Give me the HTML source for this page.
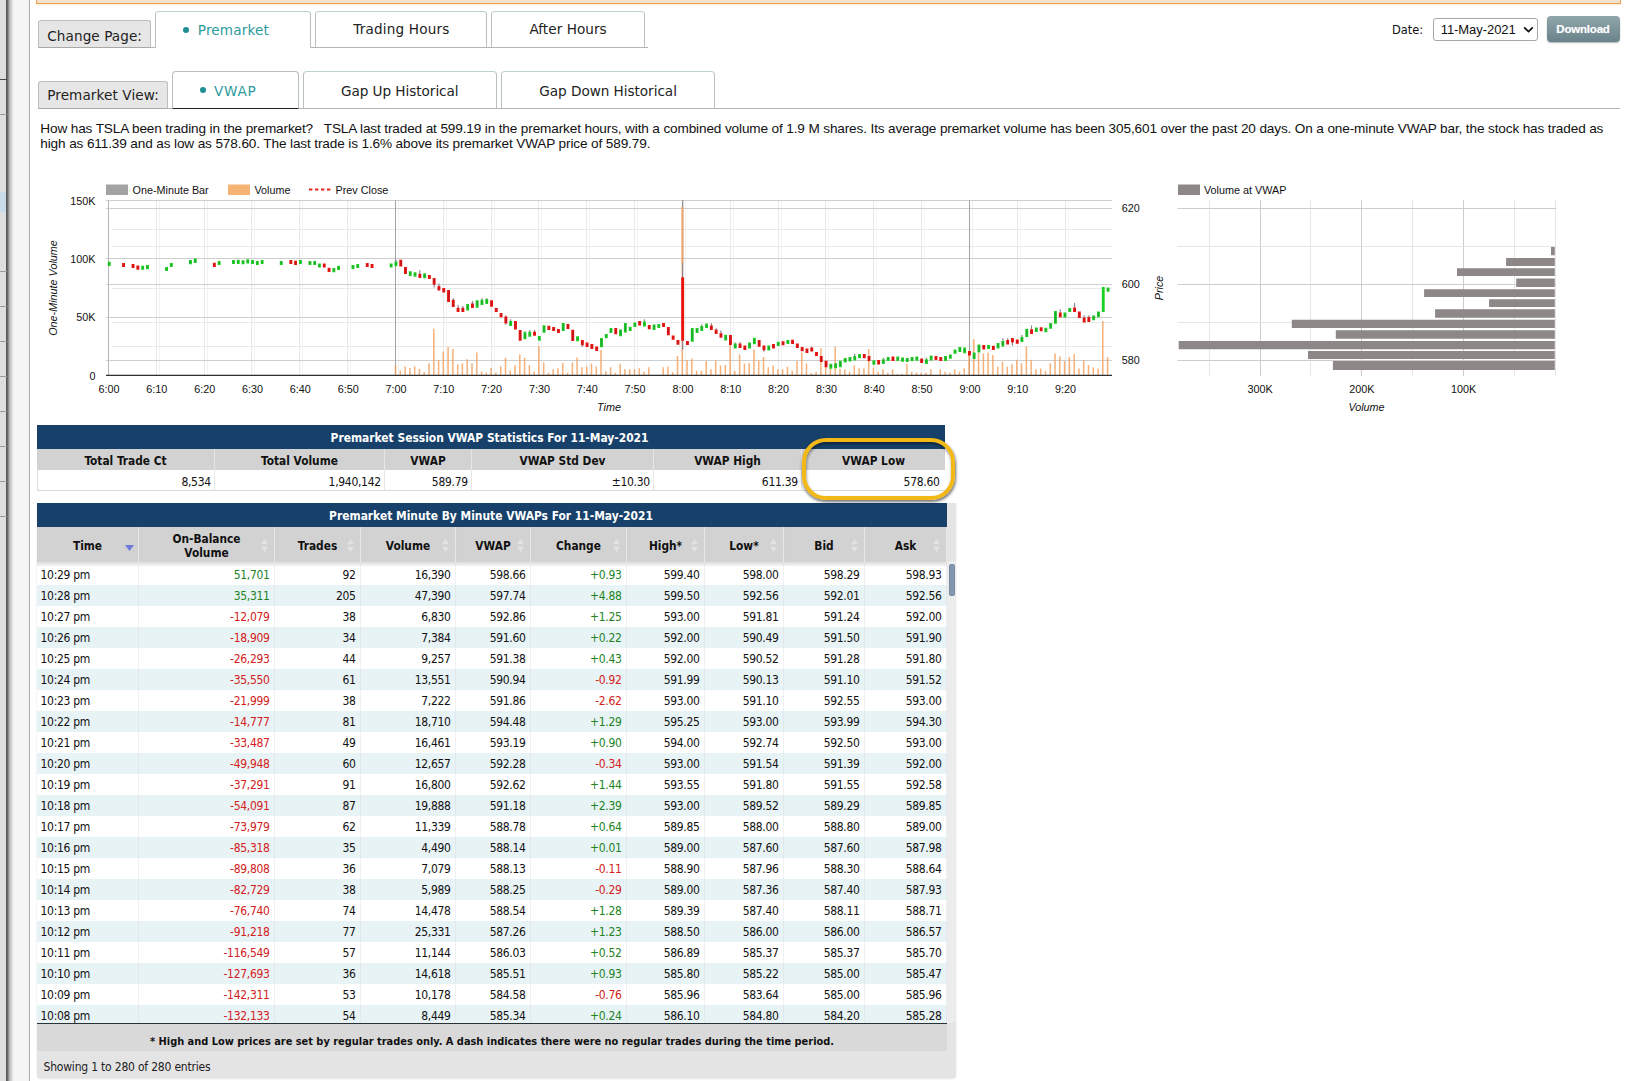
<!DOCTYPE html>
<html lang="en"><head><meta charset="utf-8"><title>TSLA Premarket VWAP</title>
<style>
html,body{margin:0;padding:0;background:#fff}
body{width:1627px;height:1081px;overflow:hidden;font-family:"Liberation Sans",Arial,sans-serif;color:#111}
#page{position:relative;width:1627px;height:1081px;overflow:hidden;background:#fff}
#page>div,#page>p,#page>table{position:absolute}
.ls0{left:0;top:0;width:7px;height:1081px;background:#dedede}
.ls1{left:6px;top:0;width:8px;height:1081px;background:linear-gradient(90deg,#4e4e4e 0,#6a6a6a 1.5px,#b5b5b5 3.5px,#ececec 7px,#f5f5f5 8px)}
.ls2{left:14px;top:0;width:15px;height:1081px;background:#f5f5f5;border-right:1.5px solid #a9a9a9}
.lh{left:0;width:6.5px;height:1px;background:#9a9a9a}
.lb{left:0;top:192px;width:6px;height:20px;background:#c9dbe8}
.obox{left:36px;top:-6px;width:1583px;height:7.5px;background:#f3e2cc;border:1.5px solid #f0a04a;box-shadow:0 1px 1px rgba(240,170,90,.18)}
.navline{height:1px;background:#b5b5b5}
.lbl{box-sizing:border-box;background:#e6e6e6;border:1px solid #bdbdbd;border-bottom-color:#a8a8a8;border-radius:3px 3px 0 0}
.tab{box-sizing:border-box;background:#fff;border:1px solid #b9bfbc;border-top-color:#bcd3c8;border-bottom:none;border-radius:4px 4px 0 0}
.tab.act2{border-bottom:1.5px solid #222;border-top-color:#b9bfbc}
.tx{font-family:"DejaVu Sans","Liberation Sans",sans-serif;font-size:13.6px;line-height:16px;color:#222;white-space:nowrap}
.tx.teal{color:#2b9a9c}
.dot{width:6px;height:6px;border-radius:50%;background:#1f8f93}
.dlabel{left:1392px;top:22.3px;font-family:"DejaVu Sans Condensed","Liberation Sans",sans-serif;font-size:12.7px;line-height:16px;color:#111}
.sel{left:1433px;top:18.4px;width:104.5px;height:22.3px;box-sizing:border-box;border:1px solid #a6a6a6;border-radius:3px;background:#fff;font-size:13px;line-height:16px;letter-spacing:-0.06px}
.sel span{position:absolute;left:6.7px;top:2.7px}
.sel svg{position:absolute;left:89px;top:6.9px}
.btn{left:1546.5px;top:16.4px;width:73px;height:25.8px;border-radius:4px;background:linear-gradient(#90a6ab,#69838a);box-shadow:0 1px 1.5px rgba(0,0,0,.3);color:#fff;font-size:11.5px;font-weight:bold;text-align:center;line-height:27px;letter-spacing:-0.2px;text-shadow:0 0 1px rgba(255,255,255,.4)}
.para{margin:0;left:40.3px;top:121.5px;width:1580px;height:32px;font-size:13.6px;line-height:14.55px;white-space:nowrap;color:#111;letter-spacing:-0.136px}
.para span{position:absolute;left:0;top:0}
.para .l2{top:15.1px;letter-spacing:-0.128px}
table{border-collapse:separate;table-layout:fixed;font-family:"DejaVu Sans Condensed","Liberation Sans",sans-serif}
.stat{left:37px;top:425px;width:908px;font-size:12px}
.stat .ttl th{background:#17416a;color:#fff;height:24px;box-sizing:border-box;padding:1.5px 3px 0 0;font-size:11.9px;font-weight:bold;text-align:center}
.stat .hd th{background:#d2d2d2;height:21px;padding:2px 0 0;box-sizing:border-box;color:#111;font-size:11.8px;font-weight:bold;border-right:1px solid #e6e6e6}
.stat .hd th:last-child,.stat td:last-child{border-right:none}
.stat td{height:21px;box-sizing:border-box;letter-spacing:-0.3px;padding:3px 3.2px 0 0;text-align:right;border-right:1px solid #e6e6e6;border-bottom:1px solid #d9d9d9;background:#fff}
.stat td:first-child{border-left:1px solid #e0e0e0}
.wrap{left:37px;top:503px;width:919px;height:575px;background:#e4e4e4;border-radius:0 0 4px 4px;box-shadow:0 1px 2px rgba(0,0,0,.12)}
.wrap>*{position:absolute}
.ttl2{left:0;top:0;width:908px;height:24px;overflow:hidden;background:#17416a;color:#fff;font:bold 11.9px/27.4px "DejaVu Sans Condensed","Liberation Sans",sans-serif;text-align:center;padding-right:2px}
.hdr{left:0;top:24px;width:910px;font-size:11.8px}
.hdr th{position:relative;height:35px;padding:0;background:#d2d2d2;border-right:1.5px solid #e8e8e8;border-left:1px solid #d0d0d0;font-weight:bold;line-height:14px;color:#111;vertical-align:middle}
.hdr th span{display:inline-block;position:relative;left:-0.5px;top:1px}
.hdr .si{position:absolute;right:4px;top:18px}
.hdr .si2{position:absolute;right:6px;top:12px}
.body{left:0;top:60.5px;width:910px;height:459.5px;overflow:hidden;background:#fff;border-bottom:1.5px solid #2a3238}
.dat{width:910px;font-size:12px;letter-spacing:-0.3px}
.dat td{height:21px;padding:1px 4.4px 0 0;text-align:right;border-right:1px solid rgba(214,220,224,.42);color:#111;box-sizing:border-box}
.dat td.t{text-align:left;padding:1px 0 0 3.5px;letter-spacing:-0.3px}
.dat tr.o td{background:#fff}
.dat tr.e td{background:#e8f3f6}
.dat td.pos{color:#21841f}
.dat td.neg{color:#d32020}
.sbar{left:910px;top:58px;width:9px;height:462px;background:#ececec}
.thumb{position:absolute;left:1.5px;top:3px;width:6px;height:32px;border-radius:3px;background:#8097ad;box-shadow:inset 0 0 0 0.5px #6d8298}
.foot{left:0;top:521px;width:910px;height:23.5px;padding-top:3.5px;background:#d9d9d9;font:bold 10.93px/27px "DejaVu Sans Condensed","Liberation Sans",sans-serif;text-align:center;color:#111}
.info{left:6.5px;top:555.7px;font:12px/16px "DejaVu Sans Condensed","Liberation Sans",sans-serif;color:#222;letter-spacing:-0.2px}
.hl{left:801.6px;top:438.3px;width:145.5px;height:53.7px;border:4.6px solid #f2b815;border-radius:24px;box-shadow:0.5px 2px 3px rgba(0,0,0,.55),inset 0.5px 2px 3px rgba(0,0,0,.45)}
.stat td:last-child{padding-right:5.5px}
.body::before{content:"";position:absolute;left:0;top:0;width:100%;height:3px;background:linear-gradient(rgba(0,0,0,.09),rgba(0,0,0,0));z-index:2}

</style></head>
<body>
<div id="page">
<div class="ls0"></div><div class="ls1"></div><div class="ls2"></div>
<div class="lh" style="top:78.5px;background:#4a4a4a"></div><div class="lh" style="top:114px"></div><div class="lh" style="top:271px"></div><div class="lh" style="top:306px"></div><div class="lh" style="top:341px"></div><div class="lh" style="top:376px"></div><div class="lh" style="top:411px"></div><div class="lh" style="top:446px"></div><div class="lh" style="top:481px"></div><div class="lh" style="top:516px"></div><div class="lb"></div>
<div class="obox"></div>

<div class="navline" style="left:38px;top:47px;width:610px"></div>
<div class="lbl" style="left:38px;top:20px;width:113px;height:28px"></div>
<div class="tab act" style="left:155px;top:11px;width:156px;height:37px"></div>
<div class="tab" style="left:315px;top:11px;width:172px;height:36px"></div>
<div class="tab" style="left:491px;top:11px;width:154px;height:36px"></div>
<div class="dot" style="left:183px;top:27px"></div>
<div class="tx" style="left:47.3px;top:27.6px;letter-spacing:0.07px">Change Page:</div>
<div class="tx teal" style="left:197.8px;top:22.2px;letter-spacing:0.14px">Premarket</div>
<div class="tx" style="left:353.3px;top:21.2px;letter-spacing:0.17px">Trading Hours</div>
<div class="tx" style="left:529.4px;top:21.2px;letter-spacing:0.05px">After Hours</div>

<div class="dlabel">Date:</div>
<div class="sel"><span>11-May-2021</span><svg width="11" height="8" viewBox="0 0 11 8"><path d="M1.2 1.4L5.5 5.600l4.3-4.200" fill="none" stroke="#111" stroke-width="1.8"/></svg></div>
<div class="btn">Download</div>

<div class="navline" style="left:38px;top:108px;width:1582px"></div>
<div class="lbl" style="left:38px;top:81px;width:130px;height:28px"></div>
<div class="tab act2" style="left:172px;top:71px;width:127px;height:38px"></div>
<div class="tab" style="left:303px;top:71px;width:194px;height:37px"></div>
<div class="tab" style="left:501px;top:71px;width:214px;height:37px"></div>
<div class="dot" style="left:200.3px;top:87.2px"></div>
<div class="tx" style="left:47.2px;top:87.4px;letter-spacing:0.1px">Premarket View:</div>
<div class="tx teal" style="left:214px;top:82.8px;letter-spacing:0.7px">VWAP</div>
<div class="tx" style="left:341px;top:82.8px;letter-spacing:-0.05px">Gap Up Historical</div>
<div class="tx" style="left:539.3px;top:82.8px;letter-spacing:-0.04px">Gap Down Historical</div>

<p class="para"><span class="l1">How has TSLA been trading in the premarket? &nbsp; TSLA last traded at 599.19 in the premarket hours, with a combined volume of 1.9 M shares. Its average premarket volume has been 305,601 over the past 20 days. On a one-minute VWAP bar, the stock has traded as</span> <span class="l2">high as 611.39 and as low as 578.60. The last trade is 1.6% above its premarket VWAP price of 589.79.</span></p>

<svg class="charts" width="1627" height="250" viewBox="0 170 1627 250" style="position:absolute;left:0;top:170px" font-family="Liberation Sans, Arial, sans-serif" font-size="10.8" fill="#111">
<path d="M156.5 200.5V375.5" stroke="#e8e8e8" stroke-width="1" fill="none"/>
<path d="M159.5 200.5V375.5" stroke="#f3f3f3" stroke-width="1" fill="none"/>
<path d="M204.5 200.5V375.5" stroke="#e8e8e8" stroke-width="1" fill="none"/>
<path d="M207.5 200.5V375.5" stroke="#f3f3f3" stroke-width="1" fill="none"/>
<path d="M251.5 200.5V375.5" stroke="#e8e8e8" stroke-width="1" fill="none"/>
<path d="M254.5 200.5V375.5" stroke="#f3f3f3" stroke-width="1" fill="none"/>
<path d="M299.5 200.5V375.5" stroke="#e8e8e8" stroke-width="1" fill="none"/>
<path d="M302.5 200.5V375.5" stroke="#f3f3f3" stroke-width="1" fill="none"/>
<path d="M347.5 200.5V375.5" stroke="#e8e8e8" stroke-width="1" fill="none"/>
<path d="M350.5 200.5V375.5" stroke="#f3f3f3" stroke-width="1" fill="none"/>
<path d="M395.5 200.5V375.5" stroke="#e8e8e8" stroke-width="1" fill="none"/>
<path d="M398.5 200.5V375.5" stroke="#f3f3f3" stroke-width="1" fill="none"/>
<path d="M443.5 200.5V375.5" stroke="#e8e8e8" stroke-width="1" fill="none"/>
<path d="M446.5 200.5V375.5" stroke="#f3f3f3" stroke-width="1" fill="none"/>
<path d="M491.5 200.5V375.5" stroke="#e8e8e8" stroke-width="1" fill="none"/>
<path d="M494.5 200.5V375.5" stroke="#f3f3f3" stroke-width="1" fill="none"/>
<path d="M538.5 200.5V375.5" stroke="#e8e8e8" stroke-width="1" fill="none"/>
<path d="M541.5 200.5V375.5" stroke="#f3f3f3" stroke-width="1" fill="none"/>
<path d="M586.5 200.5V375.5" stroke="#e8e8e8" stroke-width="1" fill="none"/>
<path d="M589.5 200.5V375.5" stroke="#f3f3f3" stroke-width="1" fill="none"/>
<path d="M634.5 200.5V375.5" stroke="#e8e8e8" stroke-width="1" fill="none"/>
<path d="M637.5 200.5V375.5" stroke="#f3f3f3" stroke-width="1" fill="none"/>
<path d="M682.5 200.5V375.5" stroke="#e8e8e8" stroke-width="1" fill="none"/>
<path d="M685.5 200.5V375.5" stroke="#f3f3f3" stroke-width="1" fill="none"/>
<path d="M730.5 200.5V375.5" stroke="#e8e8e8" stroke-width="1" fill="none"/>
<path d="M733.5 200.5V375.5" stroke="#f3f3f3" stroke-width="1" fill="none"/>
<path d="M778.5 200.5V375.5" stroke="#e8e8e8" stroke-width="1" fill="none"/>
<path d="M781.5 200.5V375.5" stroke="#f3f3f3" stroke-width="1" fill="none"/>
<path d="M825.5 200.5V375.5" stroke="#e8e8e8" stroke-width="1" fill="none"/>
<path d="M828.5 200.5V375.5" stroke="#f3f3f3" stroke-width="1" fill="none"/>
<path d="M873.5 200.5V375.5" stroke="#e8e8e8" stroke-width="1" fill="none"/>
<path d="M876.5 200.5V375.5" stroke="#f3f3f3" stroke-width="1" fill="none"/>
<path d="M921.5 200.5V375.5" stroke="#e8e8e8" stroke-width="1" fill="none"/>
<path d="M924.5 200.5V375.5" stroke="#f3f3f3" stroke-width="1" fill="none"/>
<path d="M969.5 200.5V375.5" stroke="#e8e8e8" stroke-width="1" fill="none"/>
<path d="M972.5 200.5V375.5" stroke="#f3f3f3" stroke-width="1" fill="none"/>
<path d="M1017.5 200.5V375.5" stroke="#e8e8e8" stroke-width="1" fill="none"/>
<path d="M1020.5 200.5V375.5" stroke="#f3f3f3" stroke-width="1" fill="none"/>
<path d="M1065.5 200.5V375.5" stroke="#e8e8e8" stroke-width="1" fill="none"/>
<path d="M1068.5 200.5V375.5" stroke="#f3f3f3" stroke-width="1" fill="none"/>
<path d="M112 346.5H1112" stroke="#e9e9e9" stroke-width="1" fill="none"/>
<path d="M112 288.5H1112" stroke="#e9e9e9" stroke-width="1" fill="none"/>
<path d="M112 229.5H1112" stroke="#e9e9e9" stroke-width="1" fill="none"/>
<path d="M112 322.5H1112" stroke="#e9e9e9" stroke-width="1" fill="none"/>
<path d="M112 246.5H1112" stroke="#e9e9e9" stroke-width="1" fill="none"/>
<path d="M106 317.5H1112" stroke="#cecece" stroke-width="1" fill="none"/>
<path d="M106 258.5H1112" stroke="#cecece" stroke-width="1" fill="none"/>
<path d="M106 200.5H1112" stroke="#cecece" stroke-width="1" fill="none"/>
<path d="M106 360.5H1112" stroke="#cecece" stroke-width="1" fill="none"/>
<path d="M106 284.5H1112" stroke="#cecece" stroke-width="1" fill="none"/>
<path d="M106 208.5H1112" stroke="#cecece" stroke-width="1" fill="none"/>
<path d="M108.5 200.5V375.5" stroke="#b4b4b4" stroke-width="1" fill="none"/>
<path d="M395.5 200.5V375.5" stroke="#a4a4a4" stroke-width="1" fill="none"/>
<path d="M969.5 200.5V375.5" stroke="#a4a4a4" stroke-width="1" fill="none"/>
<path d="M395.5 375.5V365.2M400.3 375.5V370.6M405.1 375.5V366.2M409.9 375.5V368.1M414.7 375.5V366.2M419.4 375.5V369.1M424.2 375.5V372.1M429 375.5V363.2M433.8 375.5V328.8M438.6 375.5V360.3M443.3 375.5V351.4M448.1 375.5V347M452.9 375.5V349M457.7 375.5V364.2M462.4 375.5V363.2M467.2 375.5V359.3M472 375.5V363.2M476.8 375.5V352.4M481.6 375.5V371.6M486.3 375.5V372.6M491.1 375.5V368.1M495.9 375.5V372.6M500.7 375.5V366.2M505.5 375.5V357.8M510.2 375.5V370.6M515 375.5V365.2M519.8 375.5V354.4M524.6 375.5V357.8M529.4 375.5V365.2M534.1 375.5V371.6M538.9 375.5V346M543.7 375.5V362.4M548.5 375.5V372.7M553.2 375.5V369.3M558 375.5V368.3M562.8 375.5V362.9M567.6 375.5V372.7M572.4 375.5V362.4M577.1 375.5V357.5M581.9 375.5V367.3M586.7 375.5V366.8M591.5 375.5V363.4M596.3 375.5V366.4M601 375.5V350.1M605.8 375.5V371.3M610.6 375.5V367.3M615.4 375.5V372.7M620.2 375.5V363.9M624.9 375.5V369.3M629.7 375.5V369.3M634.5 375.5V369.3M639.3 375.5V368.3M644 375.5V371.8M648.8 375.5V367.3M663.2 375.5V367.3M667.9 375.5V366.4M672.7 375.5V372.3M677.5 375.5V356M682.3 375.5V206.8M687.1 375.5V360M691.8 375.5V358.5M696.6 375.5V370.8M701.4 375.5V370.8M706.2 375.5V360.9M711 375.5V369.3M715.7 375.5V360.5M720.5 375.5V365.4M725.3 375.5V364.9M730.1 375.5V344.2M734.8 375.5V370.8M739.6 375.5V354.6M744.4 375.5V363.4M749.2 375.5V362.9M754 375.5V349.6M758.7 375.5V360.5M763.5 375.5V357M768.3 375.5V367.3M773.1 375.5V365.4M777.9 375.5V369.3M782.6 375.5V369.3M787.4 375.5V366.8M792.2 375.5V370.8M797 375.5V360.9M801.8 375.5V352.6M806.5 375.5V363.4M811.3 375.5V373.2M816.1 375.5V371.8M820.9 375.5V348.2M825.7 375.5V366.8M830.4 375.5V368.8M835.2 375.5V346.7M840 375.5V368.8M844.8 375.5V369.3M849.5 375.5V371.8M854.3 375.5V365.4M859.1 375.5V368.3M863.9 375.5V368.3M868.7 375.5V349.1M873.4 375.5V368.3M878.2 375.5V371.8M883 375.5V369.3M887.8 375.5V372.7M892.6 375.5V369.3M897.3 375.5V374.2M902.1 375.5V373.7M906.9 375.5V363.9M911.7 375.5V371.8M916.5 375.5V372.7M921.2 375.5V372.7M926 375.5V372.7M930.8 375.5V369.3M940.3 375.5V369.3M945.1 375.5V371.8M949.9 375.5V372.7M954.7 375.5V369.3M959.5 375.5V371.8M964.2 375.5V368.3M969 375.5V351.5M973.8 375.5V339.3M978.6 375.5V353.1M983.4 375.5V353.6M988.1 375.5V352.6M992.9 375.5V355.1M997.7 375.5V366.8M1002.5 375.5V361.8M1007.3 375.5V366.8M1012 375.5V364.3M1016.8 375.5V359.7M1021.6 375.5V363.3M1026.4 375.5V346.5M1031.1 375.5V359.7M1035.9 375.5V369.4M1040.7 375.5V368.4M1045.5 375.5V370.9M1050.3 375.5V363.3M1055 375.5V353.6M1059.8 375.5V356.5M1064.6 375.5V361.3M1069.4 375.5V357.2M1074.2 375.5V354.1M1078.9 375.5V368.4M1083.7 375.5V360.2M1088.5 375.5V365.3M1093.3 375.5V367.4M1098.1 375.5V368.4M1102.8 375.5V321M1107.6 375.5V357.2" stroke="#f39a52" stroke-opacity="0.78" stroke-width="1.5" fill="none"/>
<path d="M106 375.4H1112" stroke="#2e2e2e" stroke-width="1.3" fill="none"/>
<path d="M395.9 259.5V261.8M419.8 270.2V274.1M434.2 284.4V287.4M439 283.5V286.4M453.3 298.2V300.1M458.1 305.1V308M462.8 306V308M472.4 301.1V303.9M482 298.2V300.1M486.7 298.2V299.2M505.9 315.4V316.9M505.9 323.3V324.7M510.6 319.3V321.3M525 331.1V332.6M529.8 330.1V332.1M534.5 330.1V332.1M582.3 344.9V346.9M644.4 319.3V321.8M682.7 200.3V277.5M682.7 340.5V349.8M701.8 324.2V326.2M711.4 323.3V325.7M716.1 328.2V329.7M720.9 330.6V333.6M735.2 342.4V343.9M740 341.9V343.7M763.9 350V351.8M811.7 346.4V347.8M854.7 353.7V356.2M883.4 357.7V359.6M926.4 357.7V359.6M1002.9 338.2V341.2M1007.7 338.2V340.2M1012.4 342.3V345.8M1022 335.1V337.2M1031.5 325.5V329.5M1060.2 309.2V312.7M1074.6 303.1V307.7M1084.1 315.3V317.8M1088.9 315.3V317.3" stroke="#7d7f8c" stroke-width="1.1" fill="none"/>
<path d="M682.5 263V206.8" stroke="#f0a466" stroke-width="1.7" fill="none"/>
<path d="M107.8 261.8h2.9V265.9h-2.9zM141.2 265.7h2.9V269.8h-2.9zM146 265.1h2.9V269.3h-2.9zM165.1 267h2.9V271h-2.9zM169.9 263h2.9V267h-2.9zM189 260h2.9V264.2h-2.9zM193.8 258.6h2.9V263.1h-2.9zM217.7 261h2.9V265.1h-2.9zM232 259.9h2.9V264.1h-2.9zM236.8 259.7h2.9V263.9h-2.9zM241.6 260.2h2.9V264.2h-2.9zM246.3 259.2h2.9V263.4h-2.9zM251.1 259.9h2.9V264h-2.9zM255.9 261.1h2.9V265h-2.9zM260.7 260.1h2.9V263.9h-2.9zM279.8 261.1h2.9V264.9h-2.9zM298.9 260.1h2.9V264.1h-2.9zM308.5 261.1h2.9V265.1h-2.9zM313.2 261.1h2.9V265.1h-2.9zM318 263.6h2.9V267.6h-2.9zM332.4 268h2.9V272.3h-2.9zM337.1 265.7h2.9V270h-2.9zM351.5 265h2.9V269h-2.9zM356.3 264h2.9V268h-2.9zM389.7 263.6h2.9V267.6h-2.9zM394.5 261.5h2.9V266.2h-2.9zM408.8 271.3h2.9V275.9h-2.9zM413.6 272.3h2.9V276.8h-2.9zM423.2 273.3h2.9V278.3h-2.9zM466.2 304h2.9V310.5h-2.9zM475.7 300.3h2.9V307.8h-2.9zM480.5 299.8h2.9V304.9h-2.9zM485.3 298.9h2.9V303.9h-2.9zM509.2 321h2.9V326h-2.9zM523.5 332.3h2.9V339.3h-2.9zM528.3 331.8h2.9V336.8h-2.9zM537.9 336h2.9V340.8h-2.9zM542.6 325.3h2.9V332.8h-2.9zM561.8 323h2.9V330.9h-2.9zM576.1 336.2h2.9V341.3h-2.9zM600 337.9h2.9V347.2h-2.9zM604.8 334h2.9V338.3h-2.9zM609.5 327.9h2.9V332.9h-2.9zM619.1 329.4h2.9V336.3h-2.9zM623.9 323h2.9V332.4h-2.9zM628.7 326.7h2.9V330.9h-2.9zM633.4 322.5h2.9V327h-2.9zM643 321.5h2.9V326.5h-2.9zM652.6 324.4h2.9V330h-2.9zM657.3 323.9h2.9V328h-2.9zM690.8 328.1h2.9V341.8h-2.9zM695.6 327.9h2.9V332.9h-2.9zM700.3 325.9h2.9V330.9h-2.9zM705.1 323.5h2.9V328h-2.9zM724.2 334.8h2.9V340.5h-2.9zM733.8 343.6h2.9V348.6h-2.9zM748.1 342.6h2.9V348.6h-2.9zM752.9 337.7h2.9V344.2h-2.9zM767.3 345.4h2.9V350.6h-2.9zM776.8 341.8h2.9V346h-2.9zM786.4 339.9h2.9V344h-2.9zM829.4 363.8h2.9V368.8h-2.9zM834.2 363.3h2.9V368.3h-2.9zM838.9 360.8h2.9V367.3h-2.9zM843.7 357.9h2.9V362.4h-2.9zM848.5 356.9h2.9V361.4h-2.9zM853.3 355.9h2.9V360.4h-2.9zM858.1 353.9h2.9V358.2h-2.9zM872.4 360.3h2.9V364.7h-2.9zM881.9 359.3h2.9V363.9h-2.9zM886.7 356.9h2.9V361.1h-2.9zM896.3 356.6h2.9V360.9h-2.9zM901.1 357.4h2.9V361.7h-2.9zM905.8 357.9h2.9V362.1h-2.9zM910.6 356.9h2.9V361.1h-2.9zM915.4 356.4h2.9V360.7h-2.9zM925 359.3h2.9V363.9h-2.9zM929.7 355.4h2.9V360.4h-2.9zM944.1 355.9h2.9V360.9h-2.9zM948.9 354.4h2.9V358.8h-2.9zM953.6 349.5h2.9V353.8h-2.9zM958.4 347.1h2.9V351.9h-2.9zM963.2 347.5h2.9V353.3h-2.9zM972.7 352.5h2.9V359h-2.9zM977.5 344.6h2.9V352.6h-2.9zM987.1 345.1h2.9V349.1h-2.9zM996.6 343.1h2.9V348.4h-2.9zM1001.4 340.9h2.9V346.6h-2.9zM1020.5 336.9h2.9V342.1h-2.9zM1025.3 328.7h2.9V337h-2.9zM1034.9 327.5h2.9V331.9h-2.9zM1044.4 327.7h2.9V332.2h-2.9zM1049.2 323.1h2.9V328.8h-2.9zM1054 310.9h2.9V323.7h-2.9zM1063.5 312.4h2.9V317.6h-2.9zM1068.3 307.9h2.9V312h-2.9zM1092.2 315.5h2.9V320.2h-2.9zM1097 311.4h2.9V317.3h-2.9zM1101.8 287h2.9V312h-2.9zM1106.6 287.5h2.9V291.7h-2.9z" fill="#1fce22"/>
<path d="M108.5 263h1.4V264.7h-1.4zM142 266.9h1.4V268.6h-1.4zM146.7 266.3h1.4V268.1h-1.4zM165.8 268.2h1.4V269.8h-1.4zM170.6 264.2h1.4V265.8h-1.4zM189.7 261.2h1.4V263h-1.4zM194.5 259.8h1.4V261.9h-1.4zM218.4 262.2h1.4V263.9h-1.4zM232.8 261.1h1.4V262.9h-1.4zM237.5 260.9h1.4V262.7h-1.4zM242.3 261.4h1.4V263h-1.4zM247.1 260.4h1.4V262.2h-1.4zM251.9 261.1h1.4V262.8h-1.4zM256.6 262.3h1.4V263.8h-1.4zM261.4 261.3h1.4V262.7h-1.4zM280.5 262.3h1.4V263.7h-1.4zM299.7 261.3h1.4V262.9h-1.4zM309.2 262.3h1.4V263.9h-1.4zM314 262.3h1.4V263.9h-1.4zM318.8 264.8h1.4V266.4h-1.4zM333.1 269.2h1.4V271.1h-1.4zM337.9 266.9h1.4V268.8h-1.4zM352.2 266.2h1.4V267.8h-1.4zM357 265.2h1.4V266.8h-1.4zM390.5 264.8h1.4V266.4h-1.4zM395.2 262.7h1.4V265h-1.4zM409.6 272.5h1.4V274.7h-1.4zM414.4 273.5h1.4V275.6h-1.4zM423.9 274.5h1.4V277.1h-1.4zM466.9 305.2h1.4V309.3h-1.4zM476.5 301.5h1.4V306.6h-1.4zM481.3 301h1.4V303.7h-1.4zM486 300.1h1.4V302.7h-1.4zM509.9 322.2h1.4V324.8h-1.4zM524.3 333.5h1.4V338.1h-1.4zM529.1 333h1.4V335.6h-1.4zM538.6 337.2h1.4V339.6h-1.4zM543.4 326.5h1.4V331.6h-1.4zM562.5 324.2h1.4V329.7h-1.4zM576.8 337.4h1.4V340.1h-1.4zM600.7 339.1h1.4V346h-1.4zM605.5 335.2h1.4V337.1h-1.4zM610.3 329.1h1.4V331.7h-1.4zM619.9 330.6h1.4V335.1h-1.4zM624.6 324.2h1.4V331.2h-1.4zM629.4 327.9h1.4V329.7h-1.4zM634.2 323.7h1.4V325.8h-1.4zM643.7 322.7h1.4V325.3h-1.4zM653.3 325.6h1.4V328.8h-1.4zM658.1 325.1h1.4V326.8h-1.4zM691.5 329.3h1.4V340.6h-1.4zM696.3 329.1h1.4V331.7h-1.4zM701.1 327.1h1.4V329.7h-1.4zM705.9 324.7h1.4V326.8h-1.4zM725 336h1.4V339.3h-1.4zM734.5 344.8h1.4V347.4h-1.4zM748.9 343.8h1.4V347.4h-1.4zM753.7 338.9h1.4V343h-1.4zM768 346.6h1.4V349.4h-1.4zM777.6 343h1.4V344.8h-1.4zM787.1 341.1h1.4V342.8h-1.4zM830.1 365h1.4V367.6h-1.4zM834.9 364.5h1.4V367.1h-1.4zM839.7 362h1.4V366.1h-1.4zM844.5 359.1h1.4V361.2h-1.4zM849.2 358.1h1.4V360.2h-1.4zM854 357.1h1.4V359.2h-1.4zM858.8 355.1h1.4V357h-1.4zM873.1 361.5h1.4V363.5h-1.4zM882.7 360.5h1.4V362.7h-1.4zM887.5 358.1h1.4V359.9h-1.4zM897 357.8h1.4V359.7h-1.4zM901.8 358.6h1.4V360.5h-1.4zM906.6 359.1h1.4V360.9h-1.4zM911.4 358.1h1.4V359.9h-1.4zM916.2 357.6h1.4V359.5h-1.4zM925.7 360.5h1.4V362.7h-1.4zM930.5 356.6h1.4V359.2h-1.4zM944.8 357.1h1.4V359.7h-1.4zM949.6 355.6h1.4V357.6h-1.4zM954.4 350.7h1.4V352.6h-1.4zM959.2 348.3h1.4V350.7h-1.4zM963.9 348.7h1.4V352.1h-1.4zM973.5 353.7h1.4V357.8h-1.4zM978.3 345.8h1.4V351.4h-1.4zM987.8 346.3h1.4V347.9h-1.4zM997.4 344.3h1.4V347.2h-1.4zM1002.2 342.1h1.4V345.4h-1.4zM1021.3 338.1h1.4V340.9h-1.4zM1026.1 329.9h1.4V335.8h-1.4zM1035.6 328.7h1.4V330.7h-1.4zM1045.2 328.9h1.4V331h-1.4zM1050 324.3h1.4V327.6h-1.4zM1054.7 312.1h1.4V322.5h-1.4zM1064.3 313.6h1.4V316.4h-1.4zM1069.1 309.1h1.4V310.8h-1.4zM1093 316.7h1.4V319h-1.4zM1097.8 312.6h1.4V316.1h-1.4zM1107.3 288.7h1.4V290.5h-1.4z" fill="#1f9a3c" fill-opacity="0.75"/>
<path d="M122.1 263h2.9V267h-2.9zM131.6 264h2.9V268h-2.9zM136.4 265.5h2.9V269.8h-2.9zM212.9 262.8h2.9V267h-2.9zM289.4 259.9h2.9V263.9h-2.9zM294.1 260.7h2.9V264.9h-2.9zM322.8 263.6h2.9V267.6h-2.9zM327.6 267.7h2.9V272h-2.9zM365.8 263h2.9V267h-2.9zM370.6 264h2.9V268h-2.9zM399.3 259.7h2.9V266.4h-2.9zM404 267h2.9V274h-2.9zM418.4 273.8h2.9V278h-2.9zM427.9 275.1h2.9V279h-2.9zM432.7 278h2.9V284.7h-2.9zM437.5 286.1h2.9V290.6h-2.9zM442.3 287.9h2.9V292.6h-2.9zM447.1 290h2.9V301.9h-2.9zM451.8 299.8h2.9V307.1h-2.9zM456.6 307.7h2.9V312.1h-2.9zM461.4 307.7h2.9V312.1h-2.9zM471 303.6h2.9V308.1h-2.9zM490.1 300.3h2.9V306.8h-2.9zM494.8 307.9h2.9V312.1h-2.9zM499.6 312.9h2.9V317.2h-2.9zM504.4 316.6h2.9V323.6h-2.9zM514 321h2.9V329.5h-2.9zM518.7 330.1h2.9V340.8h-2.9zM533.1 331.8h2.9V335.8h-2.9zM547.4 325.7h2.9V329.9h-2.9zM552.2 326.9h2.9V330.9h-2.9zM557 328.9h2.9V332.9h-2.9zM566.5 323.9h2.9V329h-2.9zM571.3 329.8h2.9V341.1h-2.9zM580.9 339.9h2.9V345.2h-2.9zM585.6 342.4h2.9V347h-2.9zM590.4 344.1h2.9V348.9h-2.9zM595.2 346.6h2.9V351.1h-2.9zM614.3 327.9h2.9V334.2h-2.9zM638.2 321h2.9V325.5h-2.9zM647.8 324.9h2.9V329.3h-2.9zM662.1 323h2.9V327h-2.9zM666.9 326.9h2.9V335.2h-2.9zM671.7 335.6h2.9V339.8h-2.9zM676.5 339.9h2.9V344.7h-2.9zM681.2 277.2h2.9V340.8h-2.9zM686 340.9h2.9V345h-2.9zM709.9 325.4h2.9V330h-2.9zM714.7 329.4h2.9V333.9h-2.9zM719.5 333.3h2.9V337.8h-2.9zM729 335h2.9V345h-2.9zM738.6 343.4h2.9V348.1h-2.9zM743.4 345.6h2.9V349.9h-2.9zM757.7 339.9h2.9V346.7h-2.9zM762.5 345.6h2.9V350.3h-2.9zM772 344.1h2.9V348.6h-2.9zM781.6 341.2h2.9V345.2h-2.9zM791.1 339.7h2.9V344h-2.9zM795.9 343.6h2.9V347.9h-2.9zM800.7 347.1h2.9V351.3h-2.9zM805.5 348.5h2.9V353.1h-2.9zM810.3 347.5h2.9V351.6h-2.9zM815 352h2.9V356h-2.9zM819.8 355.9h2.9V362.1h-2.9zM824.6 360.8h2.9V367.3h-2.9zM862.8 353.9h2.9V358.2h-2.9zM867.6 355.9h2.9V360.9h-2.9zM877.2 360.1h2.9V364.4h-2.9zM891.5 356.4h2.9V360.9h-2.9zM920.2 358.4h2.9V362.9h-2.9zM934.5 355.9h2.9V360.1h-2.9zM939.3 356.9h2.9V361.1h-2.9zM968 351h2.9V355.5h-2.9zM982.3 345.1h2.9V349.6h-2.9zM991.9 345.8h2.9V350.1h-2.9zM1006.2 339.9h2.9V344.6h-2.9zM1011 337.9h2.9V342.6h-2.9zM1015.8 339.4h2.9V343.8h-2.9zM1030.1 329.2h2.9V333.9h-2.9zM1039.7 327.2h2.9V331.2h-2.9zM1058.8 312.4h2.9V317.3h-2.9zM1073.1 307.4h2.9V312h-2.9zM1077.9 311.4h2.9V318.1h-2.9zM1082.7 317.5h2.9V322.4h-2.9zM1087.4 317h2.9V322h-2.9z" fill="#ea150c"/>
<path d="M122.8 264.2h1.4V265.8h-1.4zM132.4 265.2h1.4V266.8h-1.4zM137.2 266.7h1.4V268.6h-1.4zM213.6 264h1.4V265.8h-1.4zM290.1 261.1h1.4V262.7h-1.4zM294.9 261.9h1.4V263.7h-1.4zM323.6 264.8h1.4V266.4h-1.4zM328.3 268.9h1.4V270.8h-1.4zM366.6 264.2h1.4V265.8h-1.4zM371.3 265.2h1.4V266.8h-1.4zM400 260.9h1.4V265.2h-1.4zM404.8 268.2h1.4V272.8h-1.4zM419.1 275h1.4V276.8h-1.4zM428.7 276.3h1.4V277.8h-1.4zM433.5 279.2h1.4V283.5h-1.4zM438.3 287.3h1.4V289.4h-1.4zM443 289.1h1.4V291.4h-1.4zM447.8 291.2h1.4V300.7h-1.4zM452.6 301h1.4V305.9h-1.4zM457.4 308.9h1.4V310.9h-1.4zM462.1 308.9h1.4V310.9h-1.4zM471.7 304.8h1.4V306.9h-1.4zM490.8 301.5h1.4V305.6h-1.4zM495.6 309.1h1.4V310.9h-1.4zM500.4 314.1h1.4V316h-1.4zM505.2 317.8h1.4V322.4h-1.4zM514.7 322.2h1.4V328.3h-1.4zM519.5 331.3h1.4V339.6h-1.4zM533.8 333h1.4V334.6h-1.4zM548.2 326.9h1.4V328.7h-1.4zM552.9 328.1h1.4V329.7h-1.4zM557.7 330.1h1.4V331.7h-1.4zM567.3 325.1h1.4V327.8h-1.4zM572.1 331h1.4V339.9h-1.4zM581.6 341.1h1.4V344h-1.4zM586.4 343.6h1.4V345.8h-1.4zM591.2 345.3h1.4V347.7h-1.4zM596 347.8h1.4V349.9h-1.4zM615.1 329.1h1.4V333h-1.4zM639 322.2h1.4V324.3h-1.4zM648.5 326.1h1.4V328.1h-1.4zM662.9 324.2h1.4V325.8h-1.4zM667.6 328.1h1.4V334h-1.4zM672.4 336.8h1.4V338.6h-1.4zM677.2 341.1h1.4V343.5h-1.4zM686.8 342.1h1.4V343.8h-1.4zM710.7 326.6h1.4V328.8h-1.4zM715.4 330.6h1.4V332.7h-1.4zM720.2 334.5h1.4V336.6h-1.4zM729.8 336.2h1.4V343.8h-1.4zM739.3 344.6h1.4V346.9h-1.4zM744.1 346.8h1.4V348.7h-1.4zM758.4 341.1h1.4V345.5h-1.4zM763.2 346.8h1.4V349.1h-1.4zM772.8 345.3h1.4V347.4h-1.4zM782.3 342.4h1.4V344h-1.4zM791.9 340.9h1.4V342.8h-1.4zM796.7 344.8h1.4V346.7h-1.4zM801.5 348.3h1.4V350.1h-1.4zM806.2 349.7h1.4V351.9h-1.4zM811 348.7h1.4V350.4h-1.4zM815.8 353.2h1.4V354.8h-1.4zM820.6 357.1h1.4V360.9h-1.4zM825.4 362h1.4V366.1h-1.4zM863.6 355.1h1.4V357h-1.4zM868.4 357.1h1.4V359.7h-1.4zM877.9 361.3h1.4V363.2h-1.4zM892.3 357.6h1.4V359.7h-1.4zM920.9 359.6h1.4V361.7h-1.4zM935.3 357.1h1.4V358.9h-1.4zM940 358.1h1.4V359.9h-1.4zM968.7 352.2h1.4V354.3h-1.4zM983.1 346.3h1.4V348.4h-1.4zM992.6 347h1.4V348.9h-1.4zM1007 341.1h1.4V343.4h-1.4zM1011.7 339.1h1.4V341.4h-1.4zM1016.5 340.6h1.4V342.6h-1.4zM1030.8 330.4h1.4V332.7h-1.4zM1040.4 328.4h1.4V330h-1.4zM1059.5 313.6h1.4V316.1h-1.4zM1073.9 308.6h1.4V310.8h-1.4zM1078.6 312.6h1.4V316.9h-1.4zM1083.4 318.7h1.4V321.2h-1.4zM1088.2 318.2h1.4V320.8h-1.4z" fill="#b8142a" fill-opacity="0.75"/>
<text x="109" y="392.5" text-anchor="middle">6:00</text>
<text x="156.8" y="392.5" text-anchor="middle">6:10</text>
<text x="204.7" y="392.5" text-anchor="middle">6:20</text>
<text x="252.5" y="392.5" text-anchor="middle">6:30</text>
<text x="300.3" y="392.5" text-anchor="middle">6:40</text>
<text x="348.2" y="392.5" text-anchor="middle">6:50</text>
<text x="396" y="392.5" text-anchor="middle">7:00</text>
<text x="443.8" y="392.5" text-anchor="middle">7:10</text>
<text x="491.6" y="392.5" text-anchor="middle">7:20</text>
<text x="539.5" y="392.5" text-anchor="middle">7:30</text>
<text x="587.3" y="392.5" text-anchor="middle">7:40</text>
<text x="635.1" y="392.5" text-anchor="middle">7:50</text>
<text x="683" y="392.5" text-anchor="middle">8:00</text>
<text x="730.8" y="392.5" text-anchor="middle">8:10</text>
<text x="778.6" y="392.5" text-anchor="middle">8:20</text>
<text x="826.5" y="392.5" text-anchor="middle">8:30</text>
<text x="874.3" y="392.5" text-anchor="middle">8:40</text>
<text x="922.1" y="392.5" text-anchor="middle">8:50</text>
<text x="969.9" y="392.5" text-anchor="middle">9:00</text>
<text x="1017.8" y="392.5" text-anchor="middle">9:10</text>
<text x="1065.6" y="392.5" text-anchor="middle">9:20</text>
<text x="95.5" y="379.5" text-anchor="end">0</text>
<text x="95.5" y="321.2" text-anchor="end">50K</text>
<text x="95.5" y="262.8" text-anchor="end">100K</text>
<text x="95.5" y="204.5" text-anchor="end">150K</text>
<text x="1121.8" y="364.4">580</text>
<text x="1121.8" y="288.4">600</text>
<text x="1121.8" y="212.4">620</text>
<text x="609" y="411" text-anchor="middle" font-style="italic">Time</text>
<text transform="translate(57 288) rotate(-90)" text-anchor="middle" font-style="italic">One-Minute Volume</text>
<text transform="translate(1162.5 288) rotate(-90)" text-anchor="middle" font-style="italic">Price</text>
<rect x="106" y="184.5" width="22" height="10.5" fill="#a3a3a3"/>
<text x="132.5" y="193.5">One-Minute Bar</text>
<rect x="228" y="184.5" width="22" height="10.5" fill="#f7b374"/>
<text x="254.5" y="193.5">Volume</text>
<path d="M309 189.5H331" stroke="#e8281c" stroke-width="2" stroke-dasharray="3.4 2.6" fill="none"/>
<text x="335.5" y="193.5">Prev Close</text>
<path d="M1514.5 200V376" stroke="#e6e6e6" stroke-width="1" fill="none"/>
<path d="M1463.5 200V376" stroke="#cdcdcd" stroke-width="1" fill="none"/>
<path d="M1412.5 200V376" stroke="#e6e6e6" stroke-width="1" fill="none"/>
<path d="M1361.5 200V376" stroke="#cdcdcd" stroke-width="1" fill="none"/>
<path d="M1310.5 200V376" stroke="#e6e6e6" stroke-width="1" fill="none"/>
<path d="M1260.5 200V376" stroke="#cdcdcd" stroke-width="1" fill="none"/>
<path d="M1209.5 200V376" stroke="#e6e6e6" stroke-width="1" fill="none"/>
<path d="M1555.5 200V376" stroke="#e6e6e6" stroke-width="1" fill="none"/>
<path d="M1177.5 360.5H1556" stroke="#cdcdcd" stroke-width="1" fill="none"/>
<path d="M1177.5 322.5H1556" stroke="#e6e6e6" stroke-width="1" fill="none"/>
<path d="M1177.5 284.5H1556" stroke="#cdcdcd" stroke-width="1" fill="none"/>
<path d="M1177.5 246.5H1556" stroke="#e6e6e6" stroke-width="1" fill="none"/>
<path d="M1177.5 208.5H1556" stroke="#cdcdcd" stroke-width="1" fill="none"/>
<path d="M1551 247H1554.8V255.2H1551zM1506.1 258.1H1554.8V266H1506.1zM1457 268.2H1554.8V275.9H1457zM1516.2 278.4H1554.8V287H1516.2zM1424.1 289.2H1554.8V296.9H1424.1zM1489.1 299.3H1554.8V307H1489.1zM1435.1 309.2H1554.8V317.8H1435.1zM1291.8 319.8H1554.8V328H1291.8zM1335.8 330.2H1554.8V338.8H1335.8zM1178.7 341H1554.8V349.2H1178.7zM1308 351.1H1554.8V359.1H1308zM1332.9 361H1554.8V369.9H1332.9z" fill="#8d8787"/>
<text x="1463.5" y="392.5" text-anchor="middle">100K</text>
<text x="1361.8" y="392.5" text-anchor="middle">200K</text>
<text x="1260.1" y="392.5" text-anchor="middle">300K</text>
<text x="1366.5" y="411" text-anchor="middle" font-style="italic">Volume</text>
<rect x="1178" y="184.5" width="22" height="10.5" fill="#8d8787"/>
<text x="1204" y="193.5">Volume at VWAP</text>
</svg>

<table class="stat" cellspacing="0">
<colgroup><col style="width:178px"><col style="width:170px"><col style="width:87px"><col style="width:182px"><col style="width:148px"><col style="width:143px"></colgroup>
<thead><tr class="ttl"><th colspan="6">Premarket Session VWAP Statistics For 11-May-2021</th></tr>
<tr class="hd"><th>Total Trade Ct</th><th>Total Volume</th><th>VWAP</th><th>VWAP Std Dev</th><th>VWAP High</th><th>VWAP Low</th></tr></thead>
<tbody><tr><td>8,534</td><td>1,940,142</td><td>589.79</td><td>±10.30</td><td>611.39</td><td>578.60</td></tr></tbody>
</table>

<div class="wrap">
<div class="ttl2">Premarket Minute By Minute VWAPs For 11-May-2021</div>
<table class="hdr" cellspacing="0">
<colgroup><col style="width:102px"><col style="width:136px"><col style="width:86px"><col style="width:95px"><col style="width:75px"><col style="width:96px"><col style="width:78px"><col style="width:79px"><col style="width:81px"><col style="width:82px"></colgroup>
<thead><tr><th><span>Time</span><svg class="si" width="9" height="6" viewBox="0 0 9 6"><path d="M0 0h9L4.5 6z" fill="#6c7bd8"/></svg></th><th><span>On-Balance<br>Volume</span><svg class="si2" width="7" height="13" viewBox="0 0 7 13"><path d="M0 5.2h7L3.5 0zM0 7.8h7L3.5 13z" fill="#e2e2e2"/></svg></th><th><span>Trades</span><svg class="si2" width="7" height="13" viewBox="0 0 7 13"><path d="M0 5.2h7L3.5 0zM0 7.8h7L3.5 13z" fill="#e2e2e2"/></svg></th><th><span>Volume</span><svg class="si2" width="7" height="13" viewBox="0 0 7 13"><path d="M0 5.2h7L3.5 0zM0 7.8h7L3.5 13z" fill="#e2e2e2"/></svg></th><th><span>VWAP</span><svg class="si2" width="7" height="13" viewBox="0 0 7 13"><path d="M0 5.2h7L3.5 0zM0 7.8h7L3.5 13z" fill="#e2e2e2"/></svg></th><th><span>Change</span><svg class="si2" width="7" height="13" viewBox="0 0 7 13"><path d="M0 5.2h7L3.5 0zM0 7.8h7L3.5 13z" fill="#e2e2e2"/></svg></th><th><span>High*</span><svg class="si2" width="7" height="13" viewBox="0 0 7 13"><path d="M0 5.2h7L3.5 0zM0 7.8h7L3.5 13z" fill="#e2e2e2"/></svg></th><th><span>Low*</span><svg class="si2" width="7" height="13" viewBox="0 0 7 13"><path d="M0 5.2h7L3.5 0zM0 7.8h7L3.5 13z" fill="#e2e2e2"/></svg></th><th><span>Bid</span><svg class="si2" width="7" height="13" viewBox="0 0 7 13"><path d="M0 5.2h7L3.5 0zM0 7.8h7L3.5 13z" fill="#e2e2e2"/></svg></th><th><span>Ask</span><svg class="si2" width="7" height="13" viewBox="0 0 7 13"><path d="M0 5.2h7L3.5 0zM0 7.8h7L3.5 13z" fill="#e2e2e2"/></svg></th></tr></thead></table>
<div class="body">
<table class="dat" cellspacing="0">
<colgroup><col style="width:102px"><col style="width:136px"><col style="width:86px"><col style="width:95px"><col style="width:75px"><col style="width:96px"><col style="width:78px"><col style="width:79px"><col style="width:81px"><col style="width:82px"></colgroup>
<tbody>
<tr class="o"><td class="t">10:29 pm</td><td class="pos">51,701</td><td>92</td><td>16,390</td><td>598.66</td><td class="pos">+0.93</td><td>599.40</td><td>598.00</td><td>598.29</td><td>598.93</td></tr>
<tr class="e"><td class="t">10:28 pm</td><td class="pos">35,311</td><td>205</td><td>47,390</td><td>597.74</td><td class="pos">+4.88</td><td>599.50</td><td>592.56</td><td>592.01</td><td>592.56</td></tr>
<tr class="o"><td class="t">10:27 pm</td><td class="neg">-12,079</td><td>38</td><td>6,830</td><td>592.86</td><td class="pos">+1.25</td><td>593.00</td><td>591.81</td><td>591.24</td><td>592.00</td></tr>
<tr class="e"><td class="t">10:26 pm</td><td class="neg">-18,909</td><td>34</td><td>7,384</td><td>591.60</td><td class="pos">+0.22</td><td>592.00</td><td>590.49</td><td>591.50</td><td>591.90</td></tr>
<tr class="o"><td class="t">10:25 pm</td><td class="neg">-26,293</td><td>44</td><td>9,257</td><td>591.38</td><td class="pos">+0.43</td><td>592.00</td><td>590.52</td><td>591.28</td><td>591.80</td></tr>
<tr class="e"><td class="t">10:24 pm</td><td class="neg">-35,550</td><td>61</td><td>13,551</td><td>590.94</td><td class="neg">-0.92</td><td>591.99</td><td>590.13</td><td>591.10</td><td>591.52</td></tr>
<tr class="o"><td class="t">10:23 pm</td><td class="neg">-21,999</td><td>38</td><td>7,222</td><td>591.86</td><td class="neg">-2.62</td><td>593.00</td><td>591.10</td><td>592.55</td><td>593.00</td></tr>
<tr class="e"><td class="t">10:22 pm</td><td class="neg">-14,777</td><td>81</td><td>18,710</td><td>594.48</td><td class="pos">+1.29</td><td>595.25</td><td>593.00</td><td>593.99</td><td>594.30</td></tr>
<tr class="o"><td class="t">10:21 pm</td><td class="neg">-33,487</td><td>49</td><td>16,461</td><td>593.19</td><td class="pos">+0.90</td><td>594.00</td><td>592.74</td><td>592.50</td><td>593.00</td></tr>
<tr class="e"><td class="t">10:20 pm</td><td class="neg">-49,948</td><td>60</td><td>12,657</td><td>592.28</td><td class="neg">-0.34</td><td>593.00</td><td>591.54</td><td>591.39</td><td>592.00</td></tr>
<tr class="o"><td class="t">10:19 pm</td><td class="neg">-37,291</td><td>91</td><td>16,800</td><td>592.62</td><td class="pos">+1.44</td><td>593.55</td><td>591.80</td><td>591.55</td><td>592.58</td></tr>
<tr class="e"><td class="t">10:18 pm</td><td class="neg">-54,091</td><td>87</td><td>19,888</td><td>591.18</td><td class="pos">+2.39</td><td>593.00</td><td>589.52</td><td>589.29</td><td>589.85</td></tr>
<tr class="o"><td class="t">10:17 pm</td><td class="neg">-73,979</td><td>62</td><td>11,339</td><td>588.78</td><td class="pos">+0.64</td><td>589.85</td><td>588.00</td><td>588.80</td><td>589.00</td></tr>
<tr class="e"><td class="t">10:16 pm</td><td class="neg">-85,318</td><td>35</td><td>4,490</td><td>588.14</td><td class="pos">+0.01</td><td>589.00</td><td>587.60</td><td>587.60</td><td>587.98</td></tr>
<tr class="o"><td class="t">10:15 pm</td><td class="neg">-89,808</td><td>36</td><td>7,079</td><td>588.13</td><td class="neg">-0.11</td><td>588.90</td><td>587.96</td><td>588.30</td><td>588.64</td></tr>
<tr class="e"><td class="t">10:14 pm</td><td class="neg">-82,729</td><td>38</td><td>5,989</td><td>588.25</td><td class="neg">-0.29</td><td>589.00</td><td>587.36</td><td>587.40</td><td>587.93</td></tr>
<tr class="o"><td class="t">10:13 pm</td><td class="neg">-76,740</td><td>74</td><td>14,478</td><td>588.54</td><td class="pos">+1.28</td><td>589.39</td><td>587.40</td><td>588.11</td><td>588.71</td></tr>
<tr class="e"><td class="t">10:12 pm</td><td class="neg">-91,218</td><td>77</td><td>25,331</td><td>587.26</td><td class="pos">+1.23</td><td>588.50</td><td>586.00</td><td>586.00</td><td>586.57</td></tr>
<tr class="o"><td class="t">10:11 pm</td><td class="neg">-116,549</td><td>57</td><td>11,144</td><td>586.03</td><td class="pos">+0.52</td><td>586.89</td><td>585.37</td><td>585.37</td><td>585.70</td></tr>
<tr class="e"><td class="t">10:10 pm</td><td class="neg">-127,693</td><td>36</td><td>14,618</td><td>585.51</td><td class="pos">+0.93</td><td>585.80</td><td>585.22</td><td>585.00</td><td>585.47</td></tr>
<tr class="o"><td class="t">10:09 pm</td><td class="neg">-142,311</td><td>53</td><td>10,178</td><td>584.58</td><td class="neg">-0.76</td><td>585.96</td><td>583.64</td><td>585.00</td><td>585.96</td></tr>
<tr class="e"><td class="t">10:08 pm</td><td class="neg">-132,133</td><td>54</td><td>8,449</td><td>585.34</td><td class="pos">+0.24</td><td>586.10</td><td>584.80</td><td>584.20</td><td>585.28</td></tr>
</tbody></table>
</div>
<div class="sbar"><div class="thumb"></div></div>
<div class="foot">* High and Low prices are set by regular trades only. A dash indicates there were no regular trades during the time period.</div>
<div class="info">Showing 1 to 280 of 280 entries</div>
</div>

<div class="hl"></div>
</div>
</body></html>
